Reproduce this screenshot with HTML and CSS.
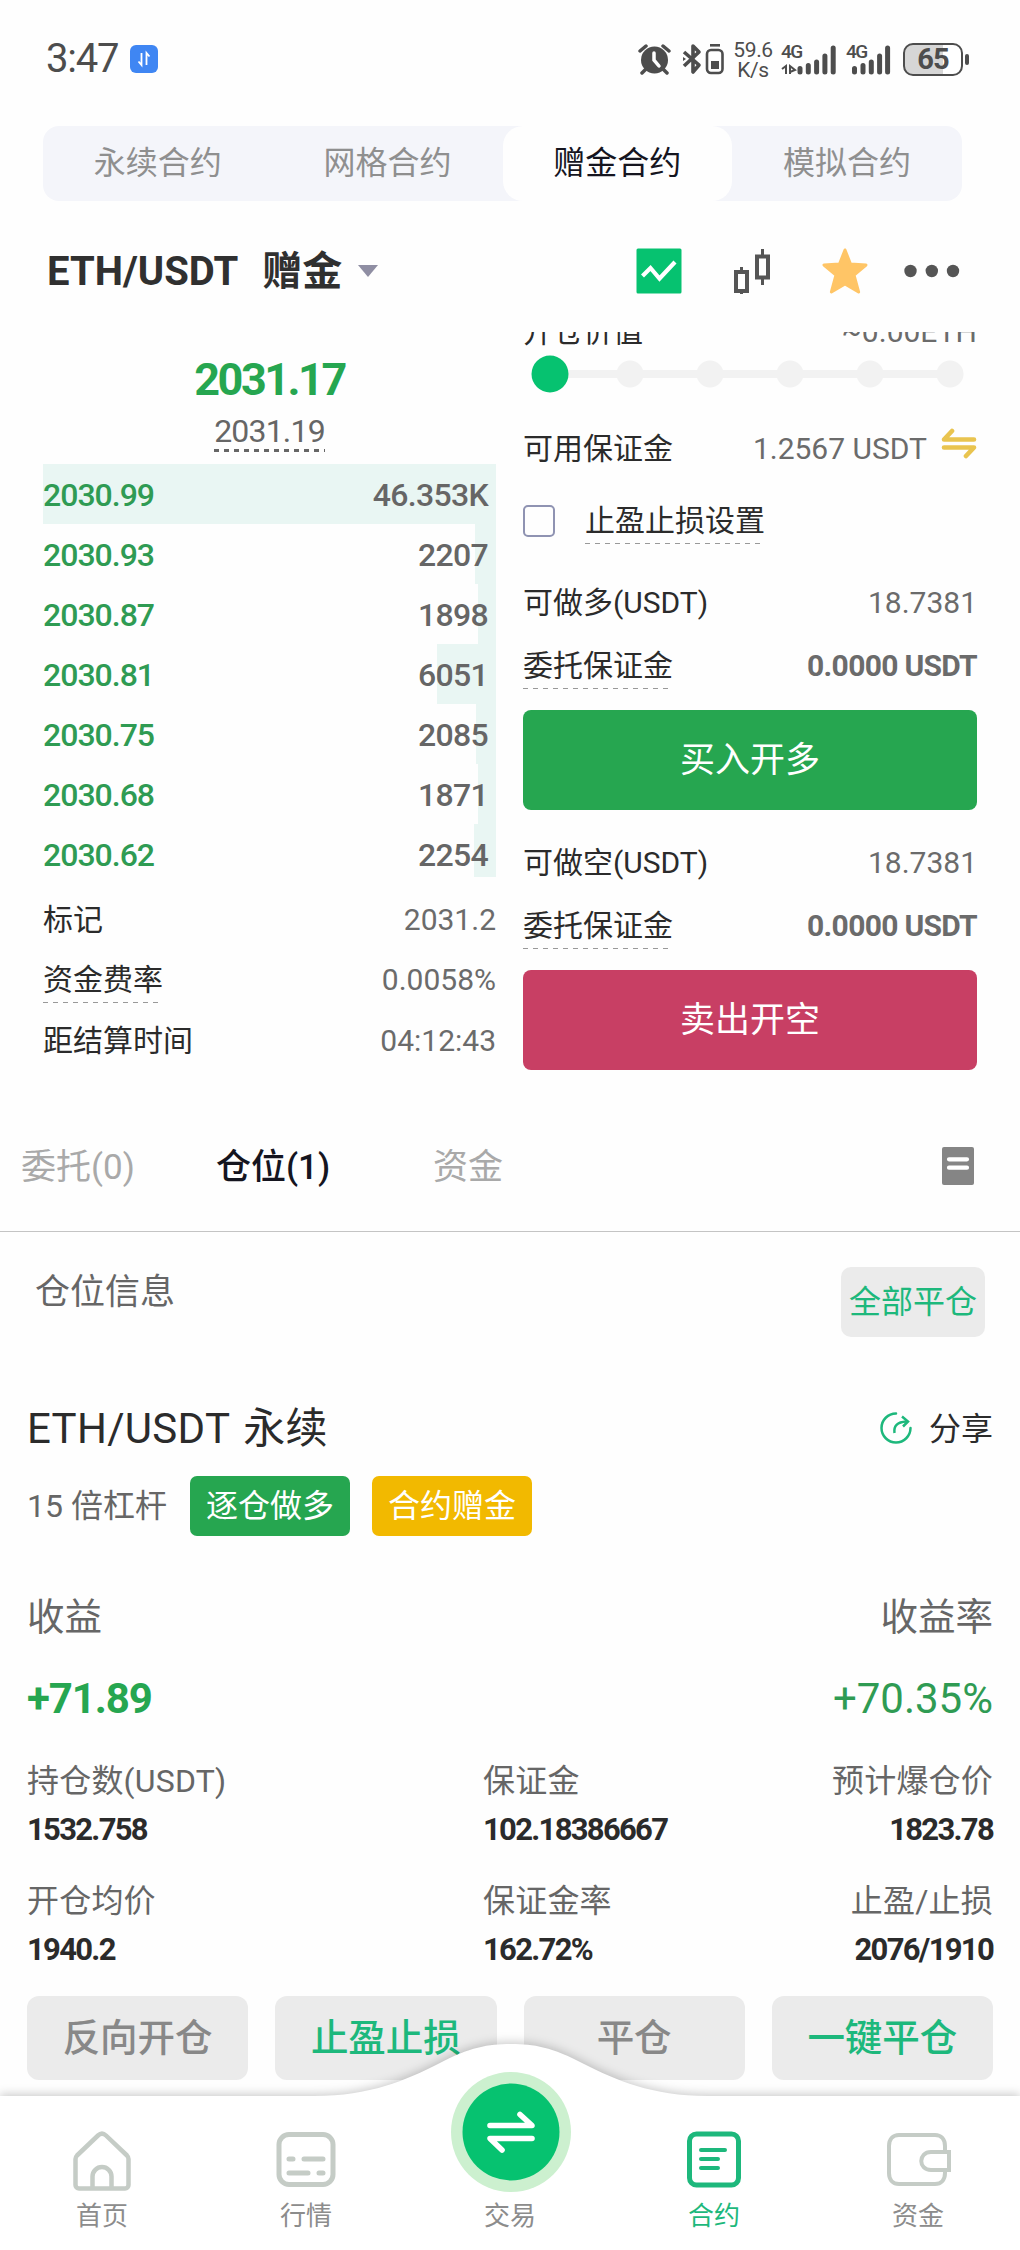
FILE: index.html
```html
<!DOCTYPE html>
<html lang="zh-CN">
<head>
<meta charset="utf-8">
<title>ETH/USDT 赠金合约</title>
<link rel="stylesheet" href="styles.css">
</head>
<body>
<div class="screen">
  <header class="status">
    <div class="status-left">
      <span class="clock">3:47</span>
      <svg class="app-dot" width="28" height="28" viewBox="0 0 28 28"><rect width="28" height="28" rx="6" fill="#3f86f3"/><path d="M11.500 8v12l-3-3.500M16.500 20V8l3 3.500" fill="none" stroke="#fff" stroke-width="1.800"/></svg>
    </div>
    <div class="status-right">
      <svg class="alarm" width="34" height="32" viewBox="0 0 34 32"><circle cx="16.500" cy="17" r="13.500" fill="#4d4d4d"/><path d="M2 8l6-5M31 8l-6-5M8 26l-4 4M25 26l4 4" stroke="#4d4d4d" stroke-width="3.500" stroke-linecap="round"/><path d="M16 10v7l5 6" fill="none" stroke="#fff" stroke-width="3.500" stroke-linecap="round"/></svg>
      <svg class="bt" width="20" height="32" viewBox="0 0 20 32"><path d="M2 9l15 13-6 7V3l6 6L2 23" fill="none" stroke="#4d4d4d" stroke-width="3.600" stroke-linejoin="round"/><path d="M1 14l3 2-3 2z" fill="#4d4d4d"/></svg>
      <svg class="btbat" width="20" height="32" viewBox="0 0 20 32"><path d="M5 2.300h10" stroke="#4d4d4d" stroke-width="2.600"/><rect x="2" y="7" width="15.500" height="23" rx="4" fill="none" stroke="#4d4d4d" stroke-width="2.600"/><rect x="6" y="18" width="8" height="8" fill="#4d4d4d"/></svg>
      <div class="speed"><span>59.6</span><span>K/s</span></div>
      <div class="cell">
        <span class="gen">4G</span>
        <svg width="58" height="32" viewBox="0 0 58 32"><path d="M1 26l4-3v8M9 31v-8l5 4-5 2" fill="none" stroke="#4d4d4d" stroke-width="2"/><path d="M19 25.500v3.500M27.300 22.500V29M35.600 19v10M43.900 13v16M52.200 5v24" stroke="#4d4d4d" stroke-width="5" stroke-linecap="round"/></svg>
      </div>
      <div class="cell cell-b">
        <span class="gen">4G</span>
        <svg width="48" height="32" viewBox="0 0 48 32"><path d="M8.500 25.500v3.500M17 22.500V29M25.300 19v10M33.600 13v16M41.600 5v24" stroke="#4d4d4d" stroke-width="5" stroke-linecap="round"/></svg>
      </div>
      <div class="battery"><span>65</span></div>
      <i class="nub"></i>
    </div>
  </header>

  <nav class="modes">
    <a>永续合约</a><a>网格合约</a><a class="on">赠金合约</a><a>模拟合约</a>
  </nav>

  <section class="pair">
    <h1><span class="pair-name">ETH/USDT</span><span>赠金</span></h1>
    <i class="caret"></i>
    <div class="tools">
      <svg width="46" height="46" viewBox="0 0 46 46"><rect x=".5" y=".5" width="45" height="45" rx="1.500" fill="#06c270"/><path d="M6.500 28l8-8 9 10.500L39 14" fill="none" stroke="#fff" stroke-width="4.200"/></svg>
      <svg class="candle" width="40" height="46" viewBox="0 0 40 46" fill="none" stroke="#555" stroke-width="4"><rect x="4" y="24" width="11" height="19"/><path d="M9.500 19v5M9.500 43v3" stroke-width="3"/><rect x="25" y="8.500" width="11" height="21"/><path d="M30.500 1v7M30.500 30v7" stroke-width="3"/></svg>
      <svg class="star" width="46" height="46" viewBox="0 0 46 46"><path d="M23 2l5.500 14 15.500 1-12 10 4.600 17L23 36 9.400 44 14 27 2 17l15.500-1z" fill="#ffc566" stroke="#ffc566" stroke-width="3" stroke-linejoin="round"/></svg>
      <svg class="more" width="56" height="14" viewBox="0 0 56 14" fill="#555"><circle cx="6.500" cy="7" r="6.200"/><circle cx="27.800" cy="7" r="6.200"/><circle cx="49" cy="7" r="6.200"/></svg>
    </div>
  </section>

  <main class="panel">
    <section class="book">
      <div class="last">2031.17</div>
      <div class="index"><span>2031.19</span></div>
      <ul class="rows">
        <li><b>2030.99</b><em>46.353K</em><i style="width:100%"></i></li>
        <li><b>2030.93</b><em>2207</em><i style="width:4.700%"></i></li>
        <li><b>2030.87</b><em>1898</em><i style="width:4%"></i></li>
        <li><b>2030.81</b><em>6051</em><i style="width:13%"></i></li>
        <li><b>2030.75</b><em>2085</em><i style="width:4.500%"></i></li>
        <li><b>2030.68</b><em>1871</em><i style="width:4%"></i></li>
        <li><b>2030.62</b><em>2254</em><i style="width:4.800%"></i></li>
      </ul>
      <div class="line mark"><span>标记</span><span class="val">2031.2</span></div>
      <div class="line"><span class="hint">资金费率</span><span class="val">0.0058%</span></div>
      <div class="line settle"><span>距结算时间</span><span class="val">04:12:43</span></div>
    </section>

    <section class="order">
      <div class="clipped"><span>开仓价值</span><span class="val">~0.00ETH</span></div>
      <svg class="slider" width="454" height="40" viewBox="0 0 454 40"><path d="M27 20h400" stroke="#f2f2f2" stroke-width="8"/><g fill="#f2f2f2"><circle cx="107" cy="20" r="13.500"/><circle cx="187" cy="20" r="13.500"/><circle cx="267" cy="20" r="13.500"/><circle cx="347" cy="20" r="13.500"/><circle cx="427" cy="20" r="13.500"/></g><circle cx="27" cy="20" r="18.500" fill="#06c270"/></svg>
      <div class="line avail"><span>可用保证金</span><span class="val">1.2567 USDT<svg class="swap" width="36" height="32" viewBox="0 0 36 32" fill="none" stroke="#e9c44f" stroke-width="4.600" stroke-linecap="round" stroke-linejoin="round"><path d="M33 12.500H3L11 4M3 20.500h30L25 29"/></svg></span></div>
      <div class="line check"><i class="box"></i><span class="hint">止盈止损设置</span></div>
      <div class="line can"><span>可做多(USDT)</span><span class="val">18.7381</span></div>
      <div class="line cost"><span class="hint">委托保证金</span><strong>0.0000 USDT</strong></div>
      <button class="act buy">买入开多</button>
      <div class="line can second"><span>可做空(USDT)</span><span class="val">18.7381</span></div>
      <div class="line cost"><span class="hint">委托保证金</span><strong>0.0000 USDT</strong></div>
      <button class="act sell">卖出开空</button>
    </section>
  </main>

  <nav class="sheets">
    <a>委托(0)</a><a class="on">仓位(1)</a><a class="fund">资金</a>
    <svg width="32" height="38" viewBox="0 0 32 38"><rect width="32" height="38" rx="2" fill="#858585"/><path d="M7 12.300h18M7 20.700h18" stroke="#fff" stroke-width="4.200" stroke-linecap="round"/></svg>
  </nav>

  <section class="info"><span>仓位信息</span><button>全部平仓</button></section>

  <article class="card">
    <div class="card-head"><h2>ETH/USDT 永续</h2>
      <a class="share"><svg width="32" height="32" viewBox="0 0 32 32" fill="none" stroke="#1db87c" stroke-width="2.500"><path d="M16 1.500A14.500 14.500 0 1 0 30.500 16" stroke-linecap="round"/><path d="M14.500 21c-1-7 2.500-11 12-11.500"/><path d="M22 4.500l6 5-5 5"/></svg>分享</a></div>
    <div class="tags"><span>15 倍杠杆</span><b class="long">逐仓做多</b><b class="bonus">合约赠金</b></div>
    <div class="big-label"><span>收益</span><span>收益率</span></div>
    <div class="big-value"><strong>+71.89</strong><span>+70.35%</span></div>
    <dl class="stats">
      <div><dt>持仓数(USDT)</dt><dd>1532.758</dd></div>
      <div><dt>保证金</dt><dd>102.18386667</dd></div>
      <div><dt>预计爆仓价</dt><dd>1823.78</dd></div>
      <div><dt>开仓均价</dt><dd>1940.2</dd></div>
      <div><dt>保证金率</dt><dd>162.72%</dd></div>
      <div><dt>止盈/止损</dt><dd>2076/1910</dd></div>
    </dl>
    <div class="ops"><button>反向开仓</button><button class="g">止盈止损</button><button>平仓</button><button class="g">一键平仓</button></div>
  </article>

  <footer class="dock">
    <svg class="dock-bg" width="1020" height="220" viewBox="0 0 1020 220"><path d="M0 66H315C370 66 406 50 438 34C470 17 488 14 511 14S552 17 584 34C616 50 652 66 707 66H1020V220H0z" fill="#fff"/></svg>
    <div class="dock-items">
      <a><svg width="60" height="60" viewBox="0 0 60 60" fill="none" stroke="#c5ccc6" stroke-width="4.500" stroke-linejoin="round"><path d="M3.500 28c0-1.500.5-2.500 1.500-3.500L26 4.500c2.500-2.400 5.500-2.400 8 0L55 24.500c1 1 1.500 2 1.500 3.500v26c0 2-1.500 3.500-3.500 3.500H7c-2 0-3.500-1.500-3.500-3.500z"/><path d="M20.500 57V45.500a9.500 9.500 0 0 1 19 0V57"/></svg>首页</a>
      <a><svg width="60" height="60" viewBox="0 0 60 60" fill="none" stroke="#c5ccc6" stroke-width="5" stroke-linecap="round"><rect x="3" y="3.500" width="54" height="50" rx="10"/><path d="M13 28h4M28 28h19M13 42h19M43 42h4"/></svg>行情</a>
      <a class="trade"><i></i>交易</a>
      <a class="on"><svg width="60" height="60" viewBox="0 0 60 60" fill="none" stroke="#1db87c" stroke-width="5" stroke-linecap="round"><rect x="5.500" y="3" width="49" height="51" rx="7"/><path d="M17 19h24M17 28h17M17 37h17" stroke-width="4"/></svg>合约</a>
      <a><svg width="66" height="60" viewBox="0 0 66 60" fill="none" stroke="#c5ccc6" stroke-width="4"><path d="M60 21v-6c0-7-4-11-10-11H14C8 4 4 8 4 15v27c0 7 4 11 10 11h36c6 0 10-4 10-11v-3"/><path d="M64 21H46c-13 0-13 18 0 18h18V21z"/></svg>资金</a>
    </div>
    <svg class="fab" width="120" height="120" viewBox="0 0 120 120"><circle cx="60" cy="60" r="60" fill="#ccf0cf"/><circle cx="60" cy="60" r="48.500" fill="#06c270"/><path d="M39 53.500h42L69 42.500M81 66.500H39L51 78" fill="none" stroke="#fff" stroke-width="5.600" stroke-linecap="round" stroke-linejoin="round"/></svg>
  </footer>
</div>
</body>
</html>
```
FILE: styles.css
```css
* { box-sizing: border-box; margin: 0; padding: 0; }
body { background: #fefefe; color: #2b2b2b; font-family: Roboto, "Noto Sans CJK SC", sans-serif; font-size: 30px; line-height: 1.4; }
i, em { font-style: normal; }
svg { display: block; flex: none; }
button { border: 0; font: inherit; }
.screen { position: relative; width: 1020px; height: 2250px; overflow: hidden; }

/* status bar */
.status { height: 118px; display: flex; justify-content: space-between; align-items: center; padding: 0 51px 0 46px; color: #4d4d4d; }
.status-left, .status-right { display: flex; align-items: center; }
.clock { font-size: 40px; letter-spacing: -1.200px; margin-right: 12px; }
.bt { margin-left: 10px; }
.btbat { margin-left: 3px; }
.speed { display: flex; flex-direction: column; width: 38px; margin-left: 9px; font-size: 21px; letter-spacing: -.4px; line-height: 20px; align-items: center; padding-top: 2px; }
.cell { position: relative; margin-left: 9px; }
.cell-b { margin-left: 7px; }
.gen { position: absolute; left: 0; top: 0; font-size: 19px; line-height: 18px; font-weight: 500; letter-spacing: -1.500px; }
.battery { width: 60px; height: 33px; margin-left: 9px; border: 2.500px solid #4d4d4d; border-radius: 10px; background: linear-gradient(90deg, #d6d6d6 68%, #fff 68%); display: flex; align-items: center; justify-content: center; font-size: 29px; font-weight: 700; line-height: 28px; letter-spacing: -1px; }
.nub { width: 4px; height: 11px; margin-left: 2px; border-radius: 2px; background: #4d4d4d; }

/* contract modes */
.modes { margin: 8px 58px 0 43px; height: 75px; background: #f4f5fa; border-radius: 16px; display: grid; grid-template-columns: repeat(4, 1fr); font-size: 32px; color: #8f8f8f; }
.modes a { display: flex; align-items: center; justify-content: center; }
.modes .on { background: #fefefe; border-radius: 20px; color: #15151f; }

/* pair heading */
.pair { height: 131px; padding: 9px 60px 0 47px; display: flex; align-items: center; }
.pair h1 { font-size: 40px; font-weight: 700; display: flex; gap: 24px; color: #303030; padding-top: 2px; }
.caret { border: 10px solid transparent; border-top: 12px solid #8f8ea3; border-bottom: 0; margin-left: 16px; }
.tools { margin-left: auto; display: flex; align-items: center; }
.candle { margin-left: 50px; }
.star { margin-left: 50px; }
.more { margin-left: 36px; }

/* trading panel */
.panel { height: 740px; padding: 0 43px; display: grid; grid-template-columns: 453px 454px; justify-content: space-between; }
.last { height: 80px; padding-top: 15px; line-height: 65px; text-align: center; font-size: 45px; font-weight: 700; letter-spacing: -2.500px; color: #26a650; }
.index { height: 40px; margin-bottom: 12px; display: flex; justify-content: center; font-size: 32px; line-height: 38px; letter-spacing: -.8px; color: #666; }
.index span { background: repeating-linear-gradient(90deg, #666 0 5px, transparent 5px 10px) 0 100% / 100% 3px no-repeat; }
.rows { list-style: none; }
.rows li { position: relative; height: 60px; display: flex; justify-content: space-between; align-items: center; padding: 3px 8px 0 0; font-size: 32px; font-weight: 500; letter-spacing: -1px; }
.rows b { position: relative; z-index: 1; font-weight: 500; color: #2f9b53; }
.rows em { position: relative; z-index: 1; color: #666; letter-spacing: -.7px; }
.rows i { position: absolute; right: 0; top: 0; height: 60px; background: #e9f6f3; }
.rows li:last-child i { height: 53px; }
.line { height: 60px; display: flex; align-items: center; justify-content: space-between; }
.line .val { color: #6b6b6b; }
.mark { margin-top: 6px; }
.settle { height: 62px; }
.hint { line-height: 46px; background: repeating-linear-gradient(90deg, #999 0 5px, transparent 5px 10px) 0 100% / calc(100% - 4px) 1.500px no-repeat; }
.clipped { height: 22px; overflow: hidden; display: flex; justify-content: space-between; }
.clipped span { line-height: 44px; margin-top: -22px; }
.clipped .val { color: #6b6b6b; }
.avail { margin-top: 25px; }
.avail .val { display: flex; align-items: center; }
.swap { margin: -12px 0 0 14px; }
.check { margin-top: 12px; justify-content: flex-start; gap: 30px; }
.box { width: 32px; height: 32px; border: 2px solid #8f93b2; border-radius: 5px; }
.can { margin-top: 22px; }
.can.second { margin-top: 23px; }
.cost { margin: 3px 0 14px; }
.cost strong { color: #6b6b6b; letter-spacing: -.7px; }
.act { display: block; width: 454px; height: 100px; border-radius: 8px; color: #fff; font-size: 35px; }
.buy { background: #26a650; }
.sell { background: #c83f64; }

/* position tabs */
.sheets { height: 160px; padding: 31px 46px 0 21px; border-bottom: 1px solid #c4c4c4; display: flex; align-items: center; font-size: 35px; color: #a9a9a9; }
.sheets a { width: 195px; }
.sheets .fund { margin-left: 22px; }
.sheets .on { color: #15151f; font-weight: 500; }
.sheets svg { margin: -2px 0 0 auto; }
.info { height: 105px; padding: 35px 35px 0; display: flex; justify-content: space-between; align-items: flex-start; font-size: 35px; color: #666; }
.info span { line-height: 46px; margin-top: 3px; }
.info button { width: 144px; height: 70px; border-radius: 10px; background: #ebebeb; color: #1db87c; font-size: 32px; white-space: nowrap; }

/* position card */
.card { padding: 62px 27px 0; }
.card-head { height: 60px; display: flex; align-items: center; justify-content: space-between; }
.card-head h2 { font-size: 42px; font-weight: 400; letter-spacing: .3px; word-spacing: 3px; }
.share { display: flex; align-items: center; gap: 17px; font-size: 32px; }
.share svg { margin-top: -2px; }
.tags { margin-top: 17px; height: 60px; display: flex; align-items: center; font-size: 32px; color: #666; }
.tags span { width: 163px; white-space: nowrap; }
.tags b { width: 160px; height: 60px; margin-right: 22px; border-radius: 7px; color: #fff; font-weight: 400; display: flex; align-items: center; justify-content: center; }
.long { background: #26a650; }
.bonus { background: #f2b900; }
.big-label { margin-top: 51px; height: 60px; display: flex; align-items: center; justify-content: space-between; font-size: 37.500px; color: #666; }
.big-value { margin-top: 22px; height: 60px; display: flex; align-items: center; justify-content: space-between; font-size: 42px; color: #2f9b53; }
.big-value strong { color: #26a650; letter-spacing: -1.100px; }
.stats { margin-top: 32px; display: grid; grid-template-columns: 456px 1fr auto; row-gap: 31px; }
.stats dt { line-height: 40px; font-size: 32px; letter-spacing: .2px; color: #666; }
.stats dd { margin-top: 9px; line-height: 40px; font-size: 31px; font-weight: 700; letter-spacing: -1.700px; }
.stats div:nth-child(3n) { text-align: right; }
.ops { margin-top: 26px; display: grid; grid-template-columns: repeat(4, 1fr); gap: 27px; }
.ops button { height: 84px; border-radius: 12px; background: #ebebeb; font-size: 37.500px; font-weight: 500; color: #888; }
.ops .g { color: #1db87c; }

/* bottom dock */
.dock { position: absolute; left: 0; bottom: 0; width: 1020px; height: 220px; }
.dock-bg { position: absolute; left: 0; top: 0; overflow: visible; filter: drop-shadow(0 -2px 5px rgba(0, 0, 0, .2)); }
.dock-items { position: relative; height: 220px; padding-top: 101px; display: grid; grid-template-columns: repeat(5, 1fr); font-size: 26px; line-height: 36px; color: #8c8c8c; }
.dock-items a { display: flex; flex-direction: column; align-items: center; gap: 7px; }
.dock-items .on { color: #1db87c; }
.trade i { height: 60px; }
.fab { position: absolute; left: 451px; top: 42px; }
```
